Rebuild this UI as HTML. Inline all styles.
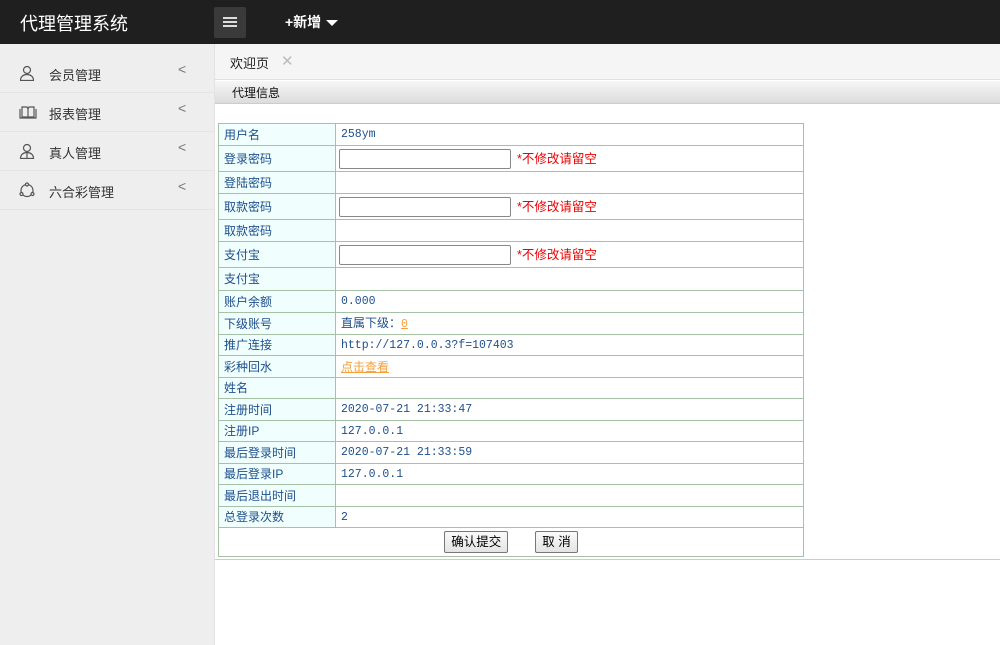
<!DOCTYPE html>
<html><head><meta charset="utf-8"><style>
*{margin:0;padding:0;box-sizing:border-box}
body{width:1000px;height:645px;overflow:hidden;background:#fff;font-family:"Liberation Sans","Noto Sans CJK SC",sans-serif;font-size:13px;position:relative}
.hd{position:absolute;left:0;top:0;width:1000px;height:44px;background:#1f1f1f}
.logo{position:absolute;left:20px;top:10px;color:#fff;font-size:18px}
.menu{position:absolute;left:214px;top:7px;width:32px;height:31px;background:#3a3a3a;border-radius:2px}
.menu i{position:absolute;left:9px;width:14px;height:2px;background:#ddd}
.add{position:absolute;left:285px;top:12px;color:#fff;font-size:14px;font-weight:bold}
.add:after{content:"";display:inline-block;margin-left:5px;border-left:6px solid transparent;border-right:6px solid transparent;border-top:6px solid #fff;vertical-align:middle}
.sb{position:absolute;left:0;top:44px;width:215px;height:601px;background:#eeeeee;border-right:1px solid #e2e2e2;padding-top:10px}
.it{height:39px;border-bottom:1px solid #e4e4e4;position:relative;color:#333;font-size:13px}
.it span{position:absolute;left:49px;top:11px}
.it b{position:absolute;left:178px;top:7px;font-weight:normal;color:#777;font-size:14px}
.it svg{position:absolute;left:19px;top:11px}
.tabs{position:absolute;left:215px;top:44px;width:785px;height:36px;background:#f5f5f5;border-bottom:1px solid #e0e0e0}
.tabs span{position:absolute;left:15px;top:9px;font-size:13px;color:#222}
.tabs i{position:absolute;left:66px;top:8px;font-style:normal;color:#bbb;font-size:15px}
.pt{position:absolute;left:215px;top:81px;width:785px;height:23px;background:linear-gradient(#f6f6f6,#dcdcdc);border-bottom:1px solid #ccc;font-size:12px;padding:3px 0 0 17px;color:#111}
.bottom{position:absolute;left:215px;top:559px;width:785px;border-top:1px solid #ccc}
table{position:absolute;left:218px;top:123px;width:586px;border-collapse:collapse;font-size:12px;color:#1d4f8c;line-height:14px}
td{border:1px solid #a6c2a6;padding:0 0 0 5px;font-family:"Liberation Sans","Noto Sans CJK SC",sans-serif}
td.l{width:117px;background:#f0fefe}
.m{font-family:"Liberation Mono","Noto Sans CJK SC",monospace;font-size:11.5px;padding-top:1px}
input{width:172px;height:20px;border:1px solid #888;border-radius:2px;vertical-align:middle;margin-left:-2px}
.r{color:#e00;font-size:12.5px;margin-left:6px;vertical-align:middle}
a{color:#f5a03a;text-decoration:underline}
.btn{display:inline-block;border:1px solid #777;background:linear-gradient(#fafafa,#e4e4e4);color:#000;font-size:12.5px;padding:2px 6px;border-radius:2px;line-height:16px}
tr.a td{height:22px}
tr.b td{height:21px}
</style></head><body>
<div class="hd"><div class="logo">代理管理系统</div>
<div class="menu"><i style="top:10px"></i><i style="top:14px"></i><i style="top:18px"></i></div>
<div class="add">+新增</div></div>
<div class="sb">
<div class="it"><svg width="16" height="16" viewBox="0 0 16 16" fill="none" stroke="#555" stroke-width="1.2"><circle cx="8" cy="5" r="3.5"/><path d="M1.5 15.5c0-4 3-6 6.5-6s6.5 2 6.5 6z"/></svg><span>会员管理</span><b>&lt;</b></div>
<div class="it"><svg width="18" height="16" viewBox="0 0 18 16" fill="none" stroke="#555" stroke-width="1.2"><path d="M1 5v9h16V5M3 3h5l1 2 1-2h5v10H3zM9 5v8"/></svg><span>报表管理</span><b>&lt;</b></div>
<div class="it"><svg width="16" height="16" viewBox="0 0 16 16" fill="none" stroke="#555" stroke-width="1.2"><circle cx="8" cy="5" r="3.5"/><path d="M1.5 15.5c0-4 3-6 6.5-6s6.5 2 6.5 6zM8 10v5"/></svg><span>真人管理</span><b>&lt;</b></div>
<div class="it"><svg width="16" height="16" viewBox="0 0 16 16" fill="none" stroke="#555" stroke-width="1.2"><circle cx="8" cy="8.5" r="6"/><circle cx="8" cy="2.5" r="1.5" fill="#eee"/><circle cx="2.5" cy="12" r="1.5" fill="#eee"/><circle cx="13.5" cy="12" r="1.5" fill="#eee"/></svg><span>六合彩管理</span><b>&lt;</b></div>
</div>
<div class="tabs"><span>欢迎页</span><i>✕</i></div>
<div class="pt">代理信息</div>
<table>
<tr class="a"><td class="l">用户名</td><td class="m">258ym</td></tr>
<tr style="height:26px"><td class="l">登录密码</td><td><input><span class="r">*不修改请留空</span></td></tr>
<tr class="a"><td class="l">登陆密码</td><td></td></tr>
<tr style="height:26px"><td class="l">取款密码</td><td><input><span class="r">*不修改请留空</span></td></tr>
<tr class="a"><td class="l">取款密码</td><td></td></tr>
<tr style="height:26px"><td class="l">支付宝</td><td><input><span class="r">*不修改请留空</span></td></tr>
<tr style="height:23px"><td class="l">支付宝</td><td></td></tr>
<tr class="a"><td class="l">账户余额</td><td class="m">0.000</td></tr>
<tr class="a"><td class="l">下级账号</td><td>直属下级：<a class="m">0</a></td></tr>
<tr class="b"><td class="l">推广连接</td><td class="m">http://127.0.0.3?f=107403</td></tr>
<tr class="a"><td class="l">彩种回水</td><td><a>点击查看</a></td></tr>
<tr class="b"><td class="l">姓名</td><td></td></tr>
<tr class="a"><td class="l">注册时间</td><td class="m">2020-07-21 21:33:47</td></tr>
<tr class="b"><td class="l">注册IP</td><td class="m">127.0.0.1</td></tr>
<tr class="a"><td class="l">最后登录时间</td><td class="m">2020-07-21 21:33:59</td></tr>
<tr class="b"><td class="l">最后登录IP</td><td class="m">127.0.0.1</td></tr>
<tr class="a"><td class="l">最后退出时间</td><td></td></tr>
<tr class="b"><td class="l">总登录次数</td><td class="m">2</td></tr>
<tr><td colspan="2" style="text-align:center;padding:0;height:29px"><span class="btn">确认提交</span><span style="display:inline-block;width:27px"></span><span class="btn">取 消</span></td></tr>
</table>
<div class="bottom"></div>
</body></html>
